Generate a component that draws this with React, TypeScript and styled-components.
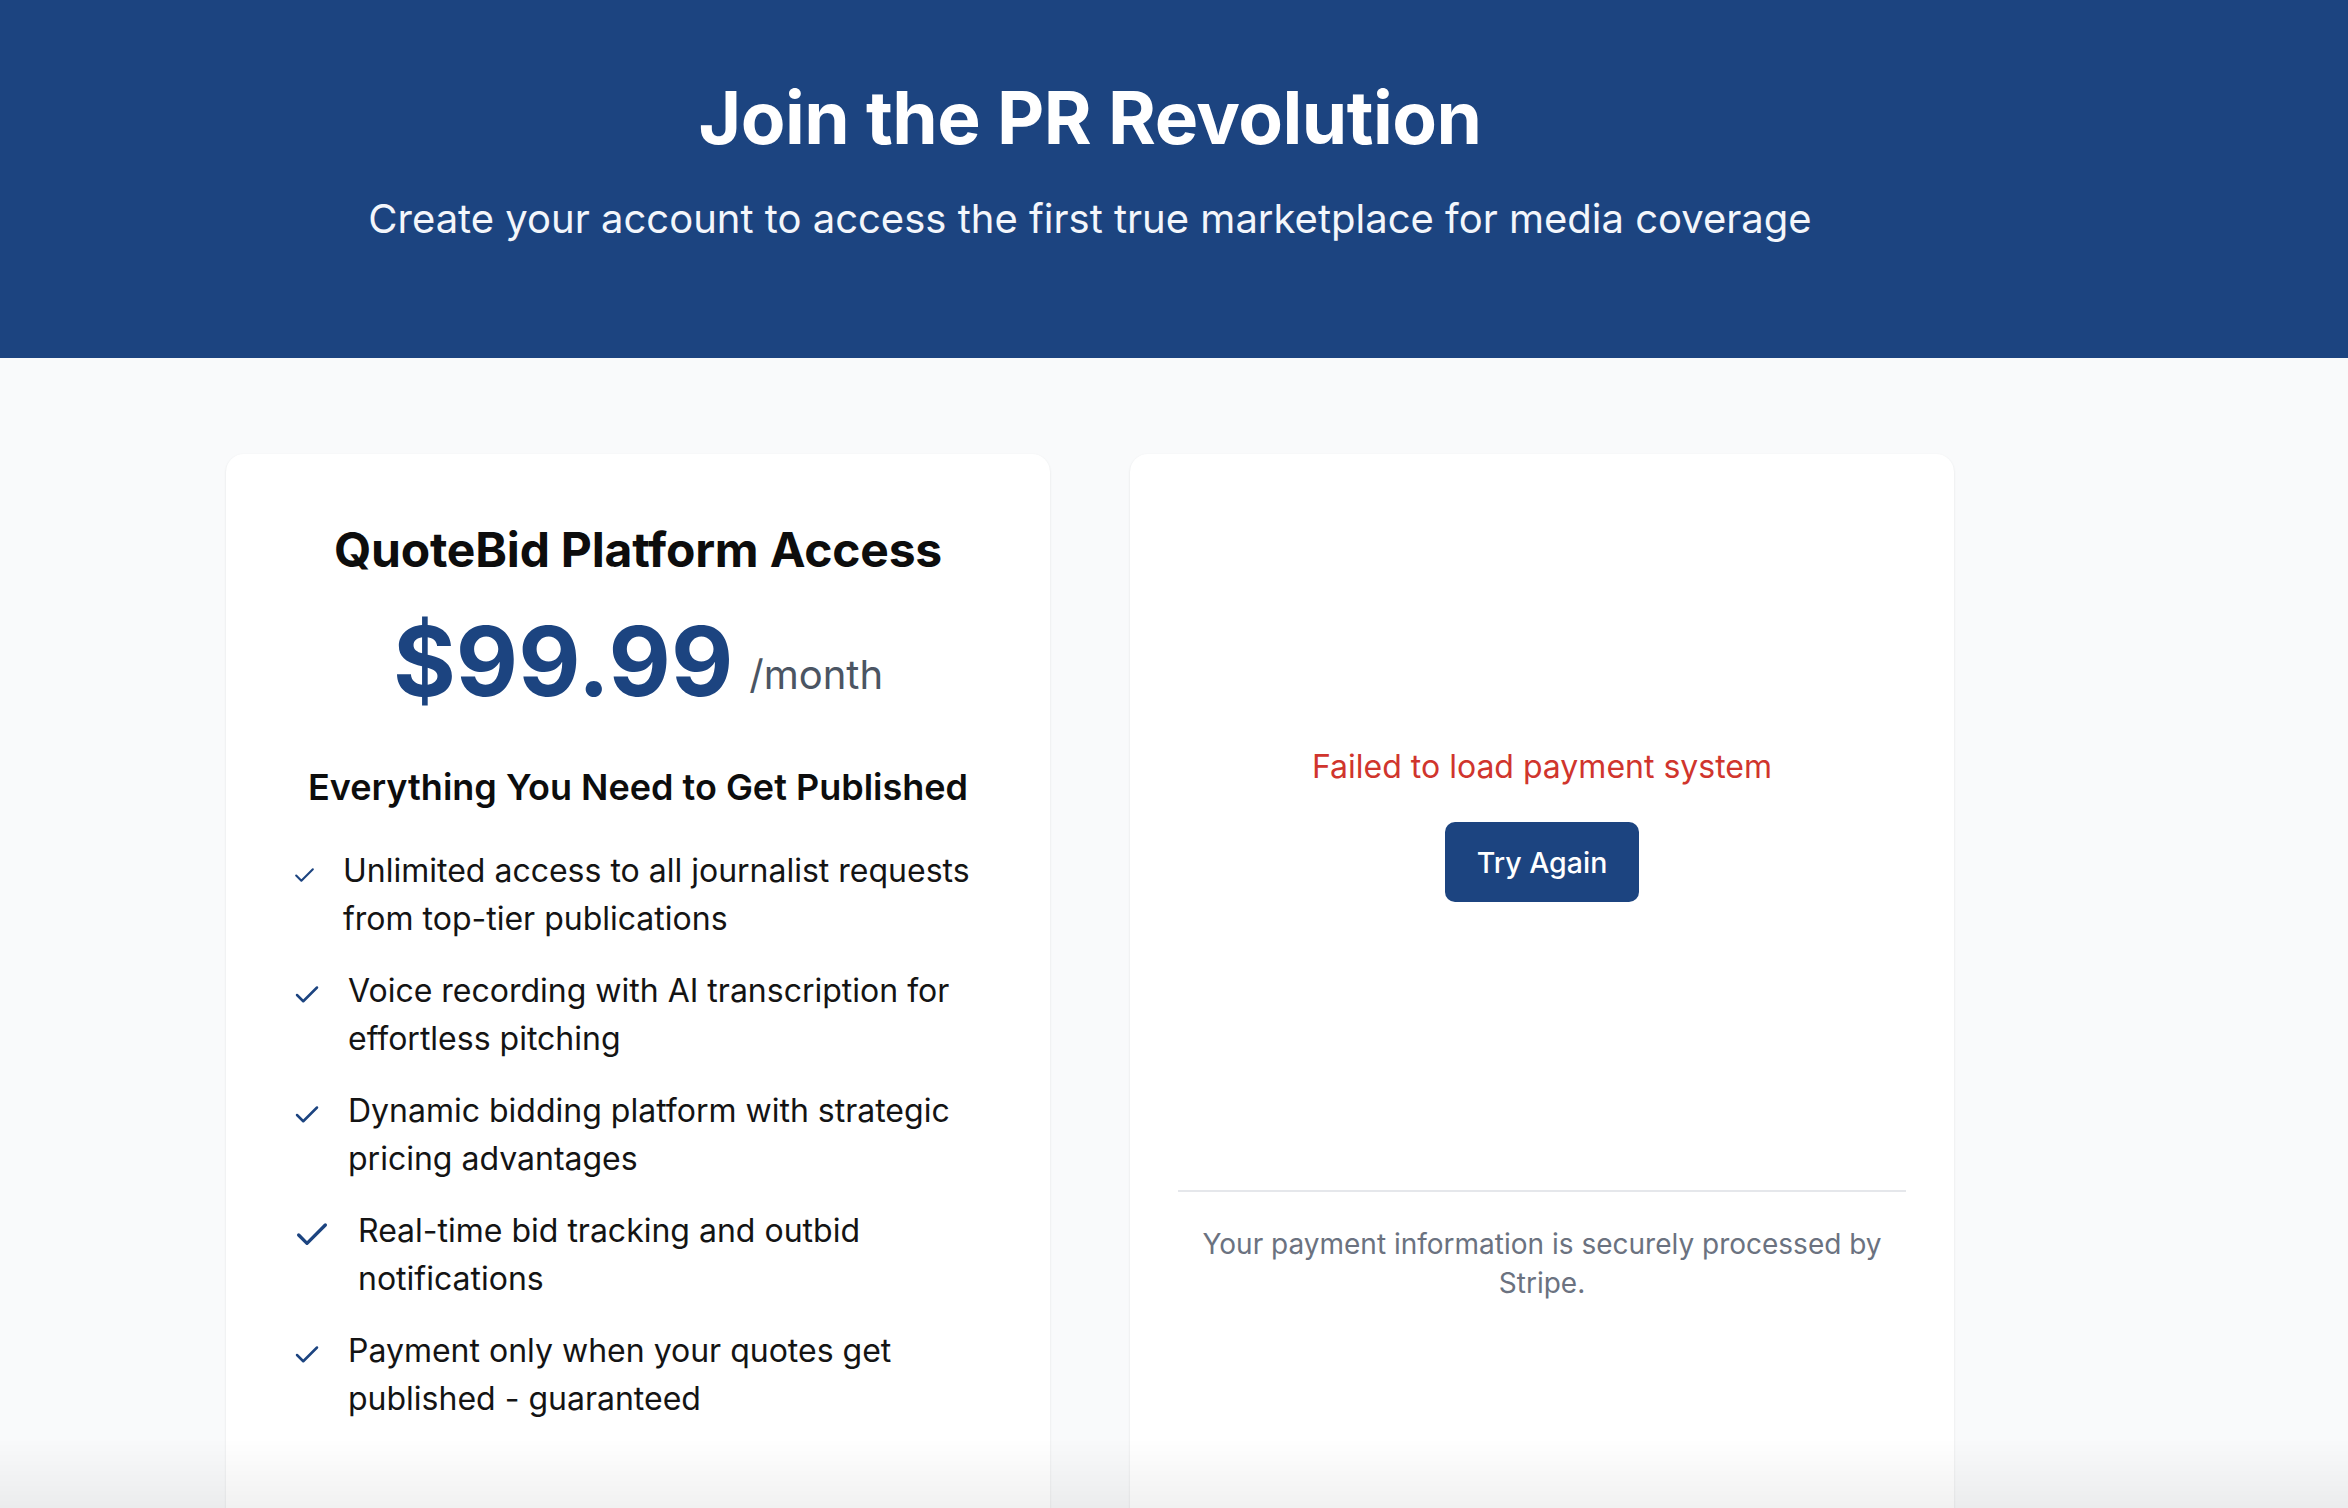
import React from "react";
import styled, { createGlobalStyle } from "styled-components";
import { Check } from "lucide-react";

const GlobalStyle = createGlobalStyle`
  html, body {
    margin: 0;
    padding: 0;
    background: #f9fafb;
    font-family: Inter, "Noto Sans", "Liberation Sans", sans-serif;
    -webkit-font-smoothing: antialiased;
  }
  * { box-sizing: border-box; }
`;

const Page = styled.div`
  min-height: 1508px;
  background: #f9fafb;
`;

const Hero = styled.header`
  background: #1c4480;
  height: 358px;
`;

const HeroInner = styled.div`
  width: 2180px;
  padding-top: 78px;
  display: flex;
  flex-direction: column;
  align-items: center;
  text-align: center;
  color: #ffffff;
`;

const HeroTitle = styled.h1`
  margin: 0;
  font-size: 73px;
  line-height: 80px;
  font-weight: 700;
  letter-spacing: -0.5px;
`;

const HeroSubtitle = styled.p`
  margin: 37px 0 0;
  font-size: 40px;
  line-height: 48px;
  font-weight: 400;
  color: #f3f6fb;
`;

const Main = styled.main`
  width: 2180px;
  padding-top: 96px;
  display: grid;
  grid-template-columns: 824px 824px;
  column-gap: 80px;
  justify-content: center;
`;

const Card = styled.section`
  background: #ffffff;
  border-radius: 18px;
  min-height: 1150px;
  box-shadow: 0 1px 3px rgba(0, 0, 0, 0.07), 0 1px 2px rgba(0, 0, 0, 0.04);
  padding: 66px 48px 72px;
  display: flex;
  flex-direction: column;
`;

const PaymentCard = styled(Card)`
  padding-top: 48px;
`;

const PlanTitle = styled.h2`
  margin: 0;
  text-align: center;
  font-size: 48px;
  line-height: 60px;
  font-weight: 700;
  color: #0d0d0d;
  letter-spacing: -0.2px;
`;

const PriceRow = styled.div`
  margin-top: 33px;
  display: flex;
  justify-content: center;
  align-items: flex-end;
  gap: 16px;
`;

const Amount = styled.span`
  font-size: 96px;
  line-height: 96px;
  font-weight: 700;
  color: #1c4480;
  letter-spacing: 0;
`;

const Period = styled.span`
  font-size: 40px;
  line-height: 48px;
  color: #4b5563;
  margin-bottom: 10px;
`;

const SectionTitle = styled.h3`
  margin: 54px 0 0;
  text-align: center;
  font-size: 36px;
  line-height: 48px;
  font-weight: 600;
  color: #0d0d0d;
`;

const FeatureList = styled.ul`
  list-style: none;
  margin: 36px 0 0;
  padding: 0 0 0 18px;
  display: flex;
  flex-direction: column;
  gap: 24px;
`;

const FeatureItem = styled.li`
  display: flex;
  align-items: flex-start;
  gap: 26px;
`;

const CheckIcon = styled(Check)<{ $size: number }>`
  flex: 0 0 auto;
  width: ${(p) => p.$size}px;
  height: ${(p) => p.$size}px;
  margin-top: ${(p) => (48 - p.$size) / 2 + 4}px;
  color: #1c4480;
`;

const FeatureText = styled.span`
  font-size: 32px;
  line-height: 48px;
  color: #141414;
`;

const StatusArea = styled.div`
  min-height: 642px;
  display: flex;
  flex-direction: column;
  align-items: center;
  justify-content: center;
`;

const ErrorText = styled.p`
  margin: 0;
  font-size: 32px;
  line-height: 45px;
  color: #d0352d;
`;

const RetryButton = styled.button`
  margin-top: 33px;
  height: 80px;
  padding: 0 32px;
  border: none;
  border-radius: 10px;
  background: #1c4480;
  color: #ffffff;
  font-family: inherit;
  font-size: 28.5px;
  font-weight: 500;
  cursor: pointer;
`;

const Divider = styled.hr`
  margin: 46px 0 0;
  border: none;
  border-top: 2px solid #e5e7eb;
`;

const SecureNote = styled.p`
  margin: 33px 16px 0;
  text-align: center;
  font-size: 28px;
  line-height: 39px;
  color: #6b7280;
`;

const BottomFade = styled.div`
  position: fixed;
  left: 0;
  right: 0;
  bottom: 0;
  height: 70px;
  pointer-events: none;
  background: linear-gradient(to bottom, rgba(0, 0, 0, 0), rgba(0, 0, 0, 0.055));
`;

const features: { text: string; size: number }[] = [
  { text: "Unlimited access to all journalist requests from top-tier publications", size: 25 },
  { text: "Voice recording with AI transcription for effortless pitching", size: 30 },
  { text: "Dynamic bidding platform with strategic pricing advantages", size: 30 },
  { text: "Real-time bid tracking and outbid notifications", size: 40 },
  { text: "Payment only when your quotes get published - guaranteed", size: 30 },
];

export default function App() {
  return (
    <Page>
      <GlobalStyle />
      <Hero>
        <HeroInner>
          <HeroTitle>Join the PR Revolution</HeroTitle>
          <HeroSubtitle>
            Create your account to access the first true marketplace for media coverage
          </HeroSubtitle>
        </HeroInner>
      </Hero>
      <Main>
        <Card>
          <PlanTitle>QuoteBid Platform Access</PlanTitle>
          <PriceRow>
            <Amount>$99.99</Amount>
            <Period>/month</Period>
          </PriceRow>
          <SectionTitle>Everything You Need to Get Published</SectionTitle>
          <FeatureList>
            {features.map((f) => (
              <FeatureItem key={f.text}>
                <CheckIcon $size={f.size} strokeWidth={2} />
                <FeatureText>{f.text}</FeatureText>
              </FeatureItem>
            ))}
          </FeatureList>
        </Card>
        <PaymentCard>
          <StatusArea>
            <ErrorText>Failed to load payment system</ErrorText>
            <RetryButton>Try Again</RetryButton>
          </StatusArea>
          <Divider />
          <SecureNote>Your payment information is securely processed by Stripe.</SecureNote>
        </PaymentCard>
      </Main>
      <BottomFade />
    </Page>
  );
}
